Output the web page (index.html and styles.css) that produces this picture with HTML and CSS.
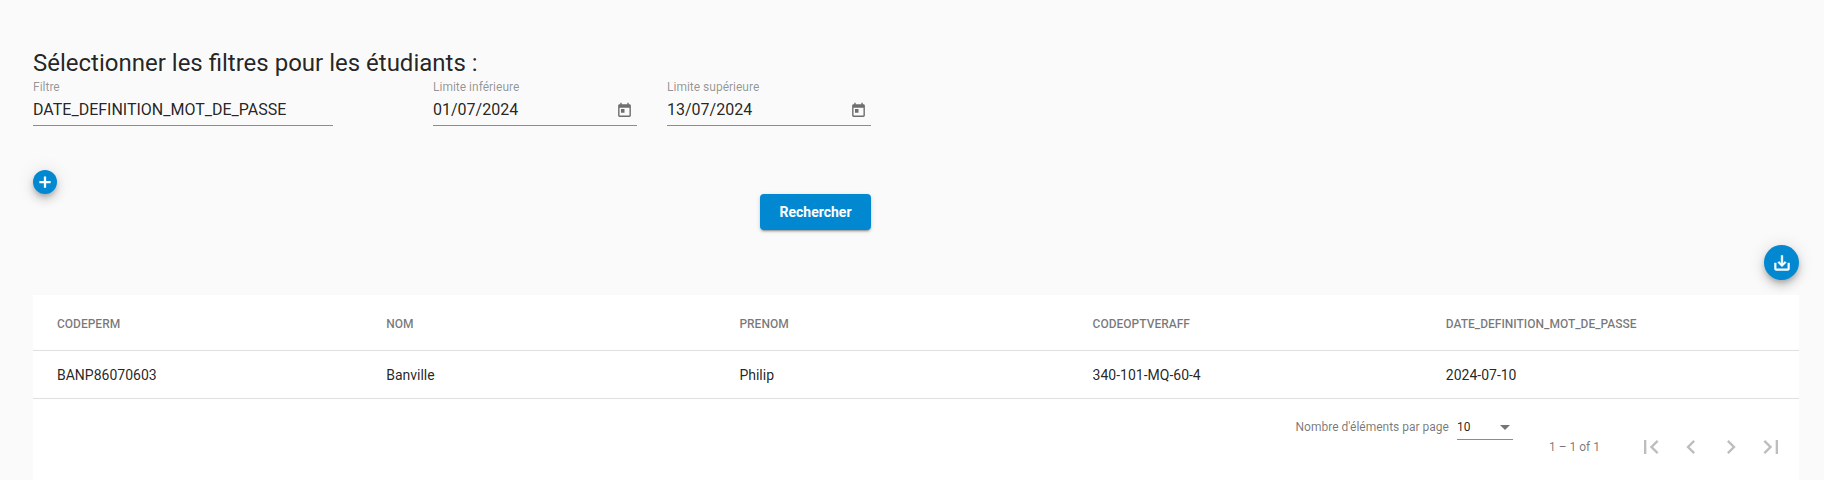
FILE: index.html
```html
<!DOCTYPE html>
<html>
    <head>
        <title>
            filtres etudiants
        </title>
        <link rel="stylesheet" href="styles.css">
    </head>
    <body>
        <main class="main">
            <h2 class="title">Sélectionner les filtres pour les étudiants :</h2>
            <div class="filters">
                <div class="field field-filter">
                    <label>Filtre</label>
                    <div class="value">DATE_DEFINITION_MOT_DE_PASSE</div>
                </div>
                <div class="field field-date">
                    <label>Limite inférieure</label>
                    <div class="value">
                        01/07/2024
                        <svg class="calendar" viewBox="0 0 24 24"><path d="M19 3h-1V1h-2v2H8V1H6v2H5c-1.11 0-1.99.9-1.99 2L3 19c0 1.1.89 2 2 2h14c1.1 0 2-.9 2-2V5c0-1.1-.9-2-2-2zm0 16H5V8h14v11zM7 10h5v5H7z"/></svg>
                    </div>
                </div>
                <div class="field field-date">
                    <label>Limite supérieure</label>
                    <div class="value">
                        13/07/2024
                        <svg class="calendar" viewBox="0 0 24 24"><path d="M19 3h-1V1h-2v2H8V1H6v2H5c-1.11 0-1.99.9-1.99 2L3 19c0 1.1.89 2 2 2h14c1.1 0 2-.9 2-2V5c0-1.1-.9-2-2-2zm0 16H5V8h14v11zM7 10h5v5H7z"/></svg>
                    </div>
                </div>
            </div>
            <button class="fab fab-small">
                <svg viewBox="0 0 24 24"><path d="M19.5 13.5h-6v6h-3v-6h-6v-3h6v-6h3v6h6z"/></svg>
            </button>
            <div class="search-row">
                <button class="search">Rechercher</button>
            </div>
            <div class="export-row">
                <button class="fab fab-large">
                    <svg viewBox="0 0 24 24"><path d="M19 12v7H5v-7H3v7c0 1.1.9 2 2 2h14c1.1 0 2-.9 2-2v-7h-2zm-6 .67l2.59-2.58L17 11.5l-5 5-5-5 1.41-1.41L11 12.67V3h2z"/></svg>
                </button>
            </div>
            <div class="card">
                <div class="row row-head">
                    <div>CODEPERM</div>
                    <div>NOM</div>
                    <div>PRENOM</div>
                    <div>CODEOPTVERAFF</div>
                    <div>DATE_DEFINITION_MOT_DE_PASSE</div>
                </div>
                <div class="row row-body">
                    <div>BANP86070603</div>
                    <div>Banville</div>
                    <div>Philip</div>
                    <div>340-101-MQ-60-4</div>
                    <div>2024-07-10</div>
                </div>
                <div class="paginator">
                    <div class="page-size">
                        <span class="page-label">Nombre d'éléments par page</span>
                        <div class="page-select">10<span class="arrow"></span></div>
                    </div>
                    <div class="page-range">1 – 1 of 1</div>
                    <div class="page-buttons">
                        <svg viewBox="0 0 24 24"><path d="M18.41 16.59L13.82 12l4.59-4.59L17 6l-6 6 6 6zM6 6h2v12H6z"/></svg>
                        <svg viewBox="0 0 24 24"><path d="M15.41 7.41L14 6l-6 6 6 6 1.41-1.41L10.83 12z"/></svg>
                        <svg viewBox="0 0 24 24"><path d="M10 6L8.59 7.41 13.17 12l-4.58 4.59L10 18l6-6z"/></svg>
                        <svg viewBox="0 0 24 24"><path d="M5.59 7.41L10.18 12l-4.59 4.59L7 18l6-6-6-6zM16 6h2v12h-2z"/></svg>
                    </div>
                </div>
            </div>
        </main>
    </body>
</html>
```

FILE: styles.css
```css
body{
    margin: 0;
    background-color: #fafafa;
    font-family: Roboto, "Liberation Sans", sans-serif;
    color: rgba(0, 0, 0, 0.87);
    height: 480px;
    overflow: hidden;
}
.main{
    padding: 47px 25px 0 33px;
}
.title{
    margin: 0 0 1px;
    font-size: 24px;
    font-weight: 400;
    line-height: 32px;
}
.filters{
    display: flex;
    column-gap: 30px;
}
.field{
    height: 45px;
    border-bottom: 1px solid #8c8c8c;
}
.field label{
    display: block;
    font-size: 12px;
    line-height: 14px;
    color: rgba(0, 0, 0, 0.42);
}
.field .value{
    display: flex;
    justify-content: space-between;
    align-items: center;
    font-size: 16px;
    line-height: 20px;
    margin-top: 6px;
}
.field-filter{
    width: 300px;
    margin-right: 70px;
}
.field-date{
    width: 204px;
}
.calendar{
    width: 17px;
    height: 17px;
    margin-right: 4px;
    fill: #6e6e6e;
}
button{
    border: none;
    cursor: pointer;
    font-family: inherit;
}
.fab{
    display: flex;
    align-items: center;
    justify-content: center;
    padding: 0;
    border-radius: 50%;
    background-color: #0288d1;
    box-shadow: 0 3px 5px -1px rgba(0, 0, 0, 0.2), 0 6px 10px 0 rgba(0, 0, 0, 0.14), 0 1px 18px 0 rgba(0, 0, 0, 0.12);
}
.fab svg{
    fill: #ffffff;
}
.fab-small{
    width: 24px;
    height: 24px;
    margin-top: 44px;
}
.fab-small svg{
    width: 18px;
    height: 18px;
}
.fab-large{
    width: 35px;
    height: 35px;
}
.fab-large svg{
    width: 20px;
    height: 20px;
    stroke: #ffffff;
    stroke-width: 0.6;
}
.search-row{
    width: 838px;
    display: flex;
    justify-content: flex-end;
}
.search{
    width: 111px;
    height: 36px;
    border-radius: 4px;
    background-color: #0288d1;
    color: #ffffff;
    font-size: 14px;
    font-weight: 700;
    box-shadow: 0 3px 1px -2px rgba(0, 0, 0, 0.2), 0 2px 2px 0 rgba(0, 0, 0, 0.14), 0 1px 5px 0 rgba(0, 0, 0, 0.12);
}
.export-row{
    display: flex;
    justify-content: flex-end;
    margin-top: 15px;
    margin-bottom: 15px;
}
.card{
    background-color: #ffffff;
    height: 185px;
}
.row{
    display: grid;
    grid-template-columns: repeat(5, 1fr);
    align-items: center;
    border-bottom: 1px solid #e0e0e0;
}
.row > div:first-child{
    padding-left: 24px;
}
.row-head{
    height: 53px;
    padding-top: 2px;
    font-size: 12px;
    font-weight: 500;
    color: rgba(0, 0, 0, 0.54);
}
.row-body{
    height: 47px;
    font-size: 14px;
}
.paginator{
    display: flex;
    justify-content: flex-end;
    padding-right: 14px;
    color: rgba(0, 0, 0, 0.54);
    font-size: 12px;
}
.page-size{
    display: flex;
    align-items: flex-start;
    margin-right: 36px;
    padding-top: 20px;
}
.page-label{
    margin-right: 8px;
    line-height: 16px;
}
.page-select{
    width: 56px;
    height: 21px;
    line-height: 16px;
    color: rgba(0, 0, 0, 0.87);
    border-bottom: 1px solid #8c8c8c;
    display: flex;
    justify-content: space-between;
    box-sizing: border-box;
}
.arrow{
    width: 0;
    height: 0;
    border-left: 5px solid transparent;
    border-right: 5px solid transparent;
    border-top: 5px solid rgba(0, 0, 0, 0.54);
    margin: 6px 3px 0 0;
}
.page-range{
    margin-top: 40px;
    margin-right: 37px;
    line-height: 16px;
}
.page-buttons{
    display: flex;
    column-gap: 12px;
    margin-top: 34px;
}
.page-buttons svg{
    width: 28px;
    height: 28px;
    fill: rgba(0, 0, 0, 0.26);
}
```
